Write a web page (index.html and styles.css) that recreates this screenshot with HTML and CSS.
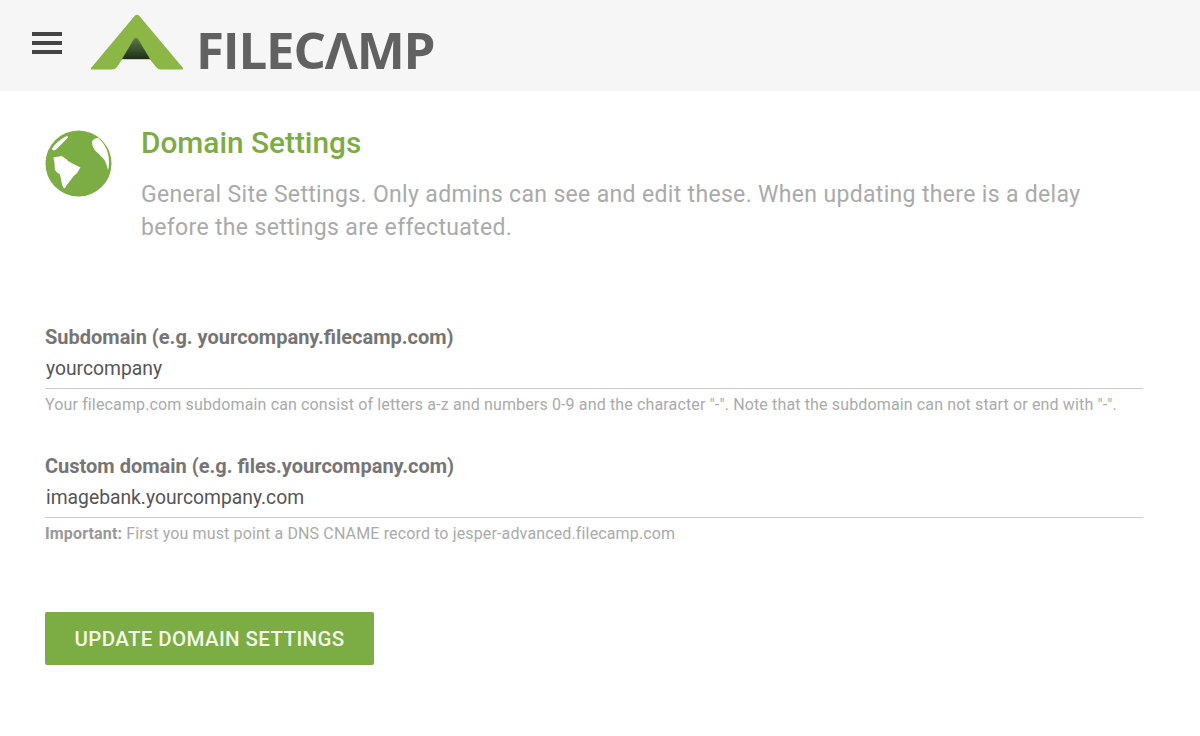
FILE: index.html
```html
<!DOCTYPE html>
<html lang="en">
<head>
<meta charset="utf-8">
<title>Domain Settings</title>
<link rel="stylesheet" href="styles.css">
</head>
<body>
<header class="topbar">
  <button class="menu" aria-label="Menu"><span></span><span></span><span></span></button>
  <svg class="mark" width="94" height="56" viewBox="0 0 94 56">
    <defs><linearGradient id="tent" x1="0" y1="0" x2="0" y2="1"><stop offset="0" stop-color="#5c7a45"/><stop offset="1" stop-color="#1f2f1c"/></linearGradient></defs>
    <path d="M45 1.500Q47 0 49 1.500L93 54Q93.500 55.500 92 55.500L71 55.500Q68 55.500 66 53L60 45.500L32 45.500L27 53Q25 55.500 22 55.500L1.500 55.500Q0 55.500 1 54Z" fill="#8cb645"/>
    <path d="M44 25Q46 23 48 25L60 45L32 45Z" fill="url(#tent)"/>
  </svg>
  <span class="wordmark">FILECΛMP</span>
</header>
<main class="content">
  <section class="intro">
    <svg class="globe" width="67" height="67" viewBox="0 0 68 68">
      <circle cx="34" cy="34" r="33.500" fill="#7cac44"/>
      <path d="M7 19Q12 11 22 6Q24 6 23 8L11 20Q8 22 7 19Z" fill="#fff"/>
      <path d="M48 11Q50 8 54 8Q62 15 64 24Q66 33 64 41Q62 33 60 30Q55 24 51 21Q47 16 48 11Z" fill="#fff"/>
      <path d="M8.500 28L17 26.500Q21 29 24 32L36 38Q33 44 29 47L22 56Q20 60 19 59Q17 56 17 54Q16 48 15 45Q11 43 10 40Q10 33 8.500 28Z" fill="#fff"/>
    </svg>
    <div class="intro-text">
      <h1>Domain Settings</h1>
      <p>General Site Settings. Only admins can see and edit these. When updating there is a delay before the settings are effectuated.</p>
    </div>
  </section>
  <form class="settings">
    <div class="field">
      <label class="label">Subdomain (e.g. yourcompany.filecamp.com)</label>
      <div class="value">yourcompany</div>
      <p class="hint">Your filecamp.com subdomain can consist of letters a-z and numbers 0-9 and the character "-". Note that the subdomain can not start or end with "-".</p>
    </div>
    <div class="field">
      <label class="label">Custom domain (e.g. files.yourcompany.com)</label>
      <div class="value">imagebank.yourcompany.com</div>
      <p class="hint"><strong>Important:</strong> First you must point a DNS CNAME record to jesper-advanced.filecamp.com</p>
    </div>
    <button class="submit" type="button">UPDATE DOMAIN SETTINGS</button>
  </form>
</main>
</body>
</html>
```
FILE: styles.css
```css
* { box-sizing: border-box; }
html, body { margin: 0; height: 100%; }
body { background: #fff; font-family: Roboto, "Liberation Sans", sans-serif; overflow: hidden; }
.topbar { height: 91px; background: #f6f6f6; display: flex; align-items: flex-start; padding-left: 32px; }
.menu { width: 30px; height: 22px; margin-top: 32px; padding: 0; border: 0; background: none; display: flex; flex-direction: column; justify-content: space-between; }
.menu span { display: block; height: 4px; background: #444; }
.mark { margin: 14px 0 0 28px; }
.wordmark { margin: 15px 0 0 12px; font-family: "Open Sans", sans-serif; font-weight: 700; font-size: 51px; line-height: 68px; letter-spacing: -1.200px; color: #616161; }
.content { padding: 38px 57px 0 45px; }
.intro { display: flex; gap: 29px; align-items: flex-start; height: 196px; }
.globe { flex: none; margin-top: 1px; }
.intro-text { width: 960px; }
h1 { margin: 0; font-size: 29.800px; font-weight: 500; line-height: 28px; color: #7cac44; }
.intro-text p { margin: 21px 0 0; font-size: 23px; line-height: 33px; color: #aaa; letter-spacing: 0.330px; }
.field { height: 129px; }
.label { display: block; font-size: 20px; font-weight: 700; line-height: 24px; color: #757575; }
.value { margin-top: 6px; height: 34px; padding: 1px 0 0 1px; border-bottom: 1px solid #ccc; font-size: 19.300px; line-height: 26px; color: #555; }
.hint { margin: 6px 0 0; font-size: 16px; line-height: 19px; color: #aaa; letter-spacing: 0.140px; }
.hint strong { color: #999; }
.submit { display: block; margin-top: 29px; width: 329px; height: 53px; padding: 1px 0 0; border: 0; border-radius: 2px; background: #7cac44; color: #f3f9e8; font: 500 20.500px/52px Roboto, sans-serif; letter-spacing: 0.380px; }
```
